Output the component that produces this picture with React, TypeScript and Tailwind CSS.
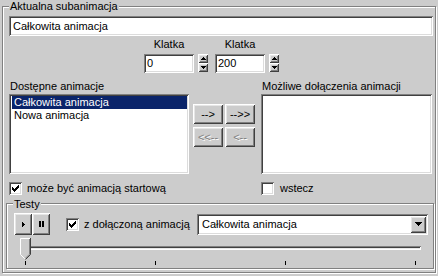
const sunken =
  "bg-white shadow-[inset_1px_1px_0_#808080,inset_-1px_-1px_0_#ffffff,inset_2px_2px_0_#404040,inset_-2px_-2px_0_#dcdcdc]";
const raised =
  "bg-[#cccccc] shadow-[inset_1px_1px_0_#ffffff,inset_-1px_-1px_0_#404040,inset_2px_2px_0_#e6e6e6,inset_-2px_-2px_0_#808080]";
const etched = "border border-[#808080] shadow-[inset_1px_1px_0_#ffffff,1px_1px_0_#ffffff]";

function Spin() {
  return (
    <div className="flex flex-col w-[10px] h-[18px]">
      <div className={`${raised} h-[9px] flex items-center justify-center`}>
        <svg width="5" height="3" viewBox="0 0 5 3" shapeRendering="crispEdges">
          <polygon points="2.5,0 5,3 0,3" fill="#000" />
        </svg>
      </div>
      <div className={`${raised} h-[9px] flex items-center justify-center`}>
        <svg width="5" height="3" viewBox="0 0 5 3" shapeRendering="crispEdges">
          <polygon points="0,0 5,0 2.5,3" fill="#000" />
        </svg>
      </div>
    </div>
  );
}

function Check({ on }: { on: boolean }) {
  return (
    <div className={`${sunken} w-[13px] h-[13px] flex items-center justify-center shrink-0`}>
      {on && (
        <svg width="7" height="7" viewBox="0 0 7 7" shapeRendering="crispEdges">
          <polygon points="0,2 2,4 7,-1 7,2 2,7 0,5" fill="#000" />
        </svg>
      )}
    </div>
  );
}

function Btn({ label, off }: { label: string; off?: boolean }) {
  return (
    <div
      className={`${raised} w-[30px] h-[20px] flex items-center justify-center ${
        off ? "text-[#808080] [text-shadow:1px_1px_0_#ffffff]" : ""
      }`}
    >
      {label}
    </div>
  );
}

function Frame({ label }: { label: string }) {
  return (
    <div className="flex flex-col items-start w-[64px]">
      <div className="w-[50px] h-[13px] text-center">Klatka</div>
      <div className="mt-[3px] flex gap-[4px] items-start">
        <div className={`${sunken} w-[50px] h-[19px] pl-[3px] pt-[3px]`}>{label}</div>
        <Spin />
      </div>
    </div>
  );
}

export default function App() {
  return (
    <div className="w-[438px] h-[276px] bg-[#cccccc] text-black text-[11px] leading-[13px] font-['Liberation_Sans',Arial,sans-serif] overflow-hidden pt-[6px] pl-[2px]">
      <div className={`relative w-[434px] h-[267px] ${etched} pl-[6px] pt-[9px]`}>
        <span className="absolute -top-[7px] left-[6px] px-[1px] bg-[#cccccc]">Aktualna subanimacja</span>

        <div className={`${sunken} w-[424px] h-[20px] pl-[4px] pt-[4px]`}>Całkowita animacja</div>

        <div className="mt-[2px] ml-[135px] flex gap-[7px]">
          <Frame label="0" />
          <Frame label="200" />
        </div>

        <div className="mt-[7px] h-[13px] flex">
          <span className="ml-[1px] w-[252px]">Dostępne animacje</span>
          <span>Możliwe dołączenia animacji</span>
        </div>

        <div className="mt-[1px] flex">
          <div className={`${sunken} w-[180px] h-[80px] p-[2px]`}>
            <div className="ml-[1px] px-[2px] h-[13px] bg-[#0a246a] text-white">Całkowita animacja</div>
            <div className="ml-[1px] px-[2px] h-[13px]">Nowa animacja</div>
          </div>
          <div className="ml-[4px] mt-[10px] flex flex-col gap-[3px]">
            <div className="flex gap-[2px]">
              <Btn label="-->" />
              <Btn label="-->>" />
            </div>
            <div className="flex gap-[2px]">
              <Btn label="<<--" off />
              <Btn label="<--" off />
            </div>
          </div>
          <div className={`${sunken} ml-[6px] w-[171px] h-[80px]`} />
        </div>

        <div className="mt-[8px] h-[13px] flex items-center">
          <div className="w-[252px] flex items-center gap-[5px]">
            <Check on />
            <span>może być animacją startową</span>
          </div>
          <div className="flex items-center gap-[6px]">
            <Check on={false} />
            <span>wstecz</span>
          </div>
        </div>

        <div className={`relative mt-[8px] -ml-[3px] w-[428px] h-[66px] ${etched} pl-[7px] pt-[9px]`}>
          <span className="absolute -top-[6px] left-[6px] px-[1px] bg-[#cccccc]">Testy</span>

          <div className="flex items-center">
            <div className="flex">
              <div className={`${raised} w-[18px] h-[22px] flex items-center justify-center`}>
                <svg width="3" height="5" viewBox="0 0 3 5" shapeRendering="crispEdges">
                  <polygon points="0,0 3,2.5 0,5" fill="#000" />
                </svg>
              </div>
              <div className={`${raised} w-[18px] h-[22px] flex items-center justify-center`}>
                <svg width="5" height="6" viewBox="0 0 5 6" shapeRendering="crispEdges">
                  <rect x="0" y="0" width="2" height="6" fill="#000" />
                  <rect x="3" y="0" width="2" height="6" fill="#000" />
                </svg>
              </div>
            </div>
            <div className="ml-[16px] flex items-center gap-[5px] w-[131px]">
              <Check on />
              <span>z dołączoną animacją</span>
            </div>
            <div className={`${sunken} w-[231px] h-[21px] flex items-center justify-between pl-[5px] pr-[2px]`}>
              <span>Całkowita animacja</span>
              <div className={`${raised} w-[16px] h-[17px] flex items-center justify-center`}>
                <svg width="7" height="4" viewBox="0 0 7 4" shapeRendering="crispEdges">
                  <polygon points="0,0 7,0 3.5,4" fill="#000" />
                </svg>
              </div>
            </div>
          </div>

          <div className="relative h-[29px] mt-[1px]">
            <div className="absolute left-[6px] top-[2px]">
              <svg width="11" height="22" viewBox="0 0 11 22">
                <polygon points="0,0 11,0 11,16 5.5,22 0,16" fill="#cccccc" />
                <path d="M0.5 16.5 V0.5 H10" stroke="#ffffff" fill="none" />
                <path d="M0.5 16.5 L5.2 21.2" stroke="#ffffff" fill="none" />
                <path d="M10.5 0 V16.5 L5.5 21.5" stroke="#404040" fill="none" />
                <path d="M9.5 1 V16.2 L5.3 20.4" stroke="#808080" fill="none" />
              </svg>
            </div>
            <div className="pt-[10px] pl-[6px]">
              <div className="w-[401px] h-[4px] shadow-[inset_1px_1px_0_#808080,inset_-1px_-1px_0_#ffffff,inset_0_2px_0_#404040] bg-[#e6e6e6]" />
            </div>
            <div className="mt-[11px] ml-[11px] w-[391px] flex justify-between">
              <div className="w-[1px] h-[4px] bg-black" />
              <div className="w-[1px] h-[4px] bg-black" />
              <div className="w-[1px] h-[4px] bg-black" />
              <div className="w-[1px] h-[4px] bg-black" />
            </div>
          </div>
        </div>
      </div>
    </div>
  );
}
